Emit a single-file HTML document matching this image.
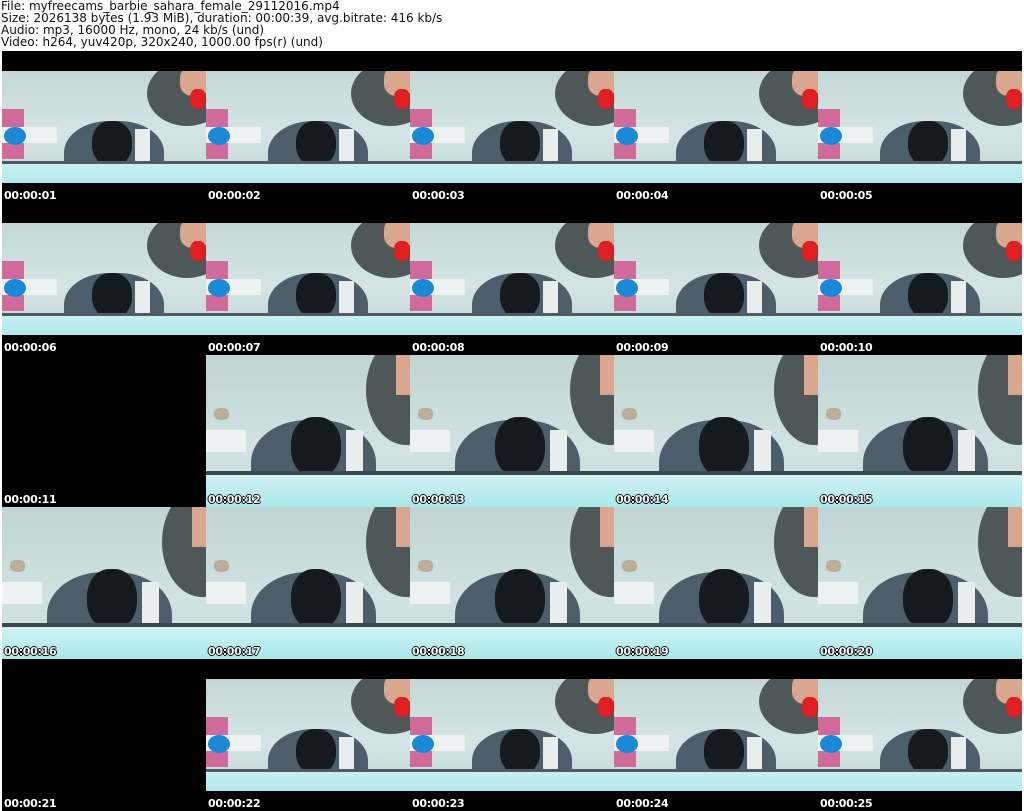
<!DOCTYPE html>
<html><head><meta charset="utf-8"><style>
*{margin:0;padding:0;box-sizing:border-box}
body{width:1024px;height:811px;background:#fff;position:relative;overflow:hidden;font-family:"DejaVu Sans","Liberation Sans",sans-serif}
.hd{position:absolute;left:1px;top:0;font-size:12px;line-height:12px;color:#111;white-space:pre}
.grid{position:absolute;left:2px;top:51px;width:1020px;height:760px;background:#000}
.c{position:absolute;width:204px;height:152px;overflow:hidden}
.t{position:absolute;left:2px;top:138px;font-size:11px;font-weight:bold;color:#fff;letter-spacing:-0.3px}
.o{text-shadow:1px 0 #000,-1px 0 #000,0 1px #000,0 -1px #000}
.A{position:absolute;left:0;top:20px;width:204px;height:112px;background:linear-gradient(#c4d8d8,#d4e4e4 55%,#c8dcdc 85%);overflow:hidden}
.B{position:absolute;left:0;top:0;width:204px;height:152px;background:linear-gradient(#c0d4d4,#d0e2e2 60%,#c8dcdc);overflow:hidden}
.s{position:absolute}
</style></head><body>
<div class="hd">File: myfreecams_barbie_sahara_female_29112016.mp4
Size: 2026138 bytes (1.93 MiB), duration: 00:00:39, avg.bitrate: 416 kb/s
Audio: mp3, 16000 Hz, mono, 24 kb/s (und)
Video: h264, yuv420p, 320x240, 1000.00 fps(r) (und)</div>
<div class="grid">
<!-- template A parts inline -->
<div class="c" style="left:0;top:0"><div class="A"><div class="s" style="left:145px;top:-10px;width:80px;height:65px;border-radius:50%;background:#4e5858"></div><div class="s" style="left:178px;top:-5px;width:30px;height:30px;background:#d9a78e;border-radius:40%"></div><div class="s" style="left:188px;top:18px;width:16px;height:20px;background:#e02020;border-radius:40%"></div><div class="s" style="left:62px;top:50px;width:100px;height:70px;border-radius:45% 45% 0 0;background:#4c5e6a"></div><div class="s" style="left:90px;top:50px;width:40px;height:45px;border-radius:45%;background:#151a20"></div><div class="s" style="left:133px;top:58px;width:15px;height:32px;background:#e8eeee"></div><div class="s" style="left:0;top:38px;width:22px;height:50px;background:#d06a9a"></div><div class="s" style="left:0;top:56px;width:55px;height:16px;background:#eef2f2"></div><div class="s" style="left:2px;top:56px;width:22px;height:18px;border-radius:50%;background:#1a8ad8"></div><div class="s" style="left:0;top:90px;width:204px;height:3px;background:#505a60"></div><div class="s" style="left:0;top:93px;width:204px;height:19px;background:linear-gradient(#c8f0f0,#b0eaee)"></div></div><div class="t">00:00:01</div></div>
<div class="c" style="left:204px;top:0"><div class="A"><div class="s" style="left:145px;top:-10px;width:80px;height:65px;border-radius:50%;background:#4e5858"></div><div class="s" style="left:178px;top:-5px;width:30px;height:30px;background:#d9a78e;border-radius:40%"></div><div class="s" style="left:188px;top:18px;width:16px;height:20px;background:#e02020;border-radius:40%"></div><div class="s" style="left:62px;top:50px;width:100px;height:70px;border-radius:45% 45% 0 0;background:#4c5e6a"></div><div class="s" style="left:90px;top:50px;width:40px;height:45px;border-radius:45%;background:#151a20"></div><div class="s" style="left:133px;top:58px;width:15px;height:32px;background:#e8eeee"></div><div class="s" style="left:0;top:38px;width:22px;height:50px;background:#d06a9a"></div><div class="s" style="left:0;top:56px;width:55px;height:16px;background:#eef2f2"></div><div class="s" style="left:2px;top:56px;width:22px;height:18px;border-radius:50%;background:#1a8ad8"></div><div class="s" style="left:0;top:90px;width:204px;height:3px;background:#505a60"></div><div class="s" style="left:0;top:93px;width:204px;height:19px;background:linear-gradient(#c8f0f0,#b0eaee)"></div></div><div class="t">00:00:02</div></div>
<div class="c" style="left:408px;top:0"><div class="A"><div class="s" style="left:145px;top:-10px;width:80px;height:65px;border-radius:50%;background:#4e5858"></div><div class="s" style="left:178px;top:-5px;width:30px;height:30px;background:#d9a78e;border-radius:40%"></div><div class="s" style="left:188px;top:18px;width:16px;height:20px;background:#e02020;border-radius:40%"></div><div class="s" style="left:62px;top:50px;width:100px;height:70px;border-radius:45% 45% 0 0;background:#4c5e6a"></div><div class="s" style="left:90px;top:50px;width:40px;height:45px;border-radius:45%;background:#151a20"></div><div class="s" style="left:133px;top:58px;width:15px;height:32px;background:#e8eeee"></div><div class="s" style="left:0;top:38px;width:22px;height:50px;background:#d06a9a"></div><div class="s" style="left:0;top:56px;width:55px;height:16px;background:#eef2f2"></div><div class="s" style="left:2px;top:56px;width:22px;height:18px;border-radius:50%;background:#1a8ad8"></div><div class="s" style="left:0;top:90px;width:204px;height:3px;background:#505a60"></div><div class="s" style="left:0;top:93px;width:204px;height:19px;background:linear-gradient(#c8f0f0,#b0eaee)"></div></div><div class="t">00:00:03</div></div>
<div class="c" style="left:612px;top:0"><div class="A"><div class="s" style="left:145px;top:-10px;width:80px;height:65px;border-radius:50%;background:#4e5858"></div><div class="s" style="left:178px;top:-5px;width:30px;height:30px;background:#d9a78e;border-radius:40%"></div><div class="s" style="left:188px;top:18px;width:16px;height:20px;background:#e02020;border-radius:40%"></div><div class="s" style="left:62px;top:50px;width:100px;height:70px;border-radius:45% 45% 0 0;background:#4c5e6a"></div><div class="s" style="left:90px;top:50px;width:40px;height:45px;border-radius:45%;background:#151a20"></div><div class="s" style="left:133px;top:58px;width:15px;height:32px;background:#e8eeee"></div><div class="s" style="left:0;top:38px;width:22px;height:50px;background:#d06a9a"></div><div class="s" style="left:0;top:56px;width:55px;height:16px;background:#eef2f2"></div><div class="s" style="left:2px;top:56px;width:22px;height:18px;border-radius:50%;background:#1a8ad8"></div><div class="s" style="left:0;top:90px;width:204px;height:3px;background:#505a60"></div><div class="s" style="left:0;top:93px;width:204px;height:19px;background:linear-gradient(#c8f0f0,#b0eaee)"></div></div><div class="t">00:00:04</div></div>
<div class="c" style="left:816px;top:0"><div class="A"><div class="s" style="left:145px;top:-10px;width:80px;height:65px;border-radius:50%;background:#4e5858"></div><div class="s" style="left:178px;top:-5px;width:30px;height:30px;background:#d9a78e;border-radius:40%"></div><div class="s" style="left:188px;top:18px;width:16px;height:20px;background:#e02020;border-radius:40%"></div><div class="s" style="left:62px;top:50px;width:100px;height:70px;border-radius:45% 45% 0 0;background:#4c5e6a"></div><div class="s" style="left:90px;top:50px;width:40px;height:45px;border-radius:45%;background:#151a20"></div><div class="s" style="left:133px;top:58px;width:15px;height:32px;background:#e8eeee"></div><div class="s" style="left:0;top:38px;width:22px;height:50px;background:#d06a9a"></div><div class="s" style="left:0;top:56px;width:55px;height:16px;background:#eef2f2"></div><div class="s" style="left:2px;top:56px;width:22px;height:18px;border-radius:50%;background:#1a8ad8"></div><div class="s" style="left:0;top:90px;width:204px;height:3px;background:#505a60"></div><div class="s" style="left:0;top:93px;width:204px;height:19px;background:linear-gradient(#c8f0f0,#b0eaee)"></div></div><div class="t">00:00:05</div></div>

<div class="c" style="left:0;top:152px"><div class="A"><div class="s" style="left:145px;top:-10px;width:80px;height:65px;border-radius:50%;background:#4e5858"></div><div class="s" style="left:178px;top:-5px;width:30px;height:30px;background:#d9a78e;border-radius:40%"></div><div class="s" style="left:188px;top:18px;width:16px;height:20px;background:#e02020;border-radius:40%"></div><div class="s" style="left:62px;top:50px;width:100px;height:70px;border-radius:45% 45% 0 0;background:#4c5e6a"></div><div class="s" style="left:90px;top:50px;width:40px;height:45px;border-radius:45%;background:#151a20"></div><div class="s" style="left:133px;top:58px;width:15px;height:32px;background:#e8eeee"></div><div class="s" style="left:0;top:38px;width:22px;height:50px;background:#d06a9a"></div><div class="s" style="left:0;top:56px;width:55px;height:16px;background:#eef2f2"></div><div class="s" style="left:2px;top:56px;width:22px;height:18px;border-radius:50%;background:#1a8ad8"></div><div class="s" style="left:0;top:90px;width:204px;height:3px;background:#505a60"></div><div class="s" style="left:0;top:93px;width:204px;height:19px;background:linear-gradient(#c8f0f0,#b0eaee)"></div></div><div class="t">00:00:06</div></div>
<div class="c" style="left:204px;top:152px"><div class="A"><div class="s" style="left:145px;top:-10px;width:80px;height:65px;border-radius:50%;background:#4e5858"></div><div class="s" style="left:178px;top:-5px;width:30px;height:30px;background:#d9a78e;border-radius:40%"></div><div class="s" style="left:188px;top:18px;width:16px;height:20px;background:#e02020;border-radius:40%"></div><div class="s" style="left:62px;top:50px;width:100px;height:70px;border-radius:45% 45% 0 0;background:#4c5e6a"></div><div class="s" style="left:90px;top:50px;width:40px;height:45px;border-radius:45%;background:#151a20"></div><div class="s" style="left:133px;top:58px;width:15px;height:32px;background:#e8eeee"></div><div class="s" style="left:0;top:38px;width:22px;height:50px;background:#d06a9a"></div><div class="s" style="left:0;top:56px;width:55px;height:16px;background:#eef2f2"></div><div class="s" style="left:2px;top:56px;width:22px;height:18px;border-radius:50%;background:#1a8ad8"></div><div class="s" style="left:0;top:90px;width:204px;height:3px;background:#505a60"></div><div class="s" style="left:0;top:93px;width:204px;height:19px;background:linear-gradient(#c8f0f0,#b0eaee)"></div></div><div class="t">00:00:07</div></div>
<div class="c" style="left:408px;top:152px"><div class="A"><div class="s" style="left:145px;top:-10px;width:80px;height:65px;border-radius:50%;background:#4e5858"></div><div class="s" style="left:178px;top:-5px;width:30px;height:30px;background:#d9a78e;border-radius:40%"></div><div class="s" style="left:188px;top:18px;width:16px;height:20px;background:#e02020;border-radius:40%"></div><div class="s" style="left:62px;top:50px;width:100px;height:70px;border-radius:45% 45% 0 0;background:#4c5e6a"></div><div class="s" style="left:90px;top:50px;width:40px;height:45px;border-radius:45%;background:#151a20"></div><div class="s" style="left:133px;top:58px;width:15px;height:32px;background:#e8eeee"></div><div class="s" style="left:0;top:38px;width:22px;height:50px;background:#d06a9a"></div><div class="s" style="left:0;top:56px;width:55px;height:16px;background:#eef2f2"></div><div class="s" style="left:2px;top:56px;width:22px;height:18px;border-radius:50%;background:#1a8ad8"></div><div class="s" style="left:0;top:90px;width:204px;height:3px;background:#505a60"></div><div class="s" style="left:0;top:93px;width:204px;height:19px;background:linear-gradient(#c8f0f0,#b0eaee)"></div></div><div class="t">00:00:08</div></div>
<div class="c" style="left:612px;top:152px"><div class="A"><div class="s" style="left:145px;top:-10px;width:80px;height:65px;border-radius:50%;background:#4e5858"></div><div class="s" style="left:178px;top:-5px;width:30px;height:30px;background:#d9a78e;border-radius:40%"></div><div class="s" style="left:188px;top:18px;width:16px;height:20px;background:#e02020;border-radius:40%"></div><div class="s" style="left:62px;top:50px;width:100px;height:70px;border-radius:45% 45% 0 0;background:#4c5e6a"></div><div class="s" style="left:90px;top:50px;width:40px;height:45px;border-radius:45%;background:#151a20"></div><div class="s" style="left:133px;top:58px;width:15px;height:32px;background:#e8eeee"></div><div class="s" style="left:0;top:38px;width:22px;height:50px;background:#d06a9a"></div><div class="s" style="left:0;top:56px;width:55px;height:16px;background:#eef2f2"></div><div class="s" style="left:2px;top:56px;width:22px;height:18px;border-radius:50%;background:#1a8ad8"></div><div class="s" style="left:0;top:90px;width:204px;height:3px;background:#505a60"></div><div class="s" style="left:0;top:93px;width:204px;height:19px;background:linear-gradient(#c8f0f0,#b0eaee)"></div></div><div class="t">00:00:09</div></div>
<div class="c" style="left:816px;top:152px"><div class="A"><div class="s" style="left:145px;top:-10px;width:80px;height:65px;border-radius:50%;background:#4e5858"></div><div class="s" style="left:178px;top:-5px;width:30px;height:30px;background:#d9a78e;border-radius:40%"></div><div class="s" style="left:188px;top:18px;width:16px;height:20px;background:#e02020;border-radius:40%"></div><div class="s" style="left:62px;top:50px;width:100px;height:70px;border-radius:45% 45% 0 0;background:#4c5e6a"></div><div class="s" style="left:90px;top:50px;width:40px;height:45px;border-radius:45%;background:#151a20"></div><div class="s" style="left:133px;top:58px;width:15px;height:32px;background:#e8eeee"></div><div class="s" style="left:0;top:38px;width:22px;height:50px;background:#d06a9a"></div><div class="s" style="left:0;top:56px;width:55px;height:16px;background:#eef2f2"></div><div class="s" style="left:2px;top:56px;width:22px;height:18px;border-radius:50%;background:#1a8ad8"></div><div class="s" style="left:0;top:90px;width:204px;height:3px;background:#505a60"></div><div class="s" style="left:0;top:93px;width:204px;height:19px;background:linear-gradient(#c8f0f0,#b0eaee)"></div></div><div class="t">00:00:10</div></div>

<div class="c" style="left:0;top:304px"><div class="t">00:00:11</div></div>
<div class="c" style="left:204px;top:304px"><div class="B"><div class="s" style="left:160px;top:-20px;width:80px;height:110px;border-radius:50%;background:#4e5858"></div><div class="s" style="left:190px;top:-5px;width:20px;height:45px;background:#d9a78e"></div><div class="s" style="left:45px;top:65px;width:125px;height:95px;border-radius:45% 45% 0 0;background:#4c5e6a"></div><div class="s" style="left:85px;top:62px;width:50px;height:60px;border-radius:45%;background:#151a20"></div><div class="s" style="left:140px;top:75px;width:17px;height:42px;background:#e8eeee"></div><div class="s" style="left:0;top:75px;width:40px;height:22px;background:#eef2f2"></div><div class="s" style="left:8px;top:53px;width:15px;height:12px;background:#bcae98;border-radius:40%"></div><div class="s" style="left:0;top:116px;width:204px;height:4px;background:#3c464c"></div><div class="s" style="left:0;top:120px;width:204px;height:32px;background:linear-gradient(#d0f2f2,#a8e8ec)"></div></div><div class="t o">00:00:12</div></div>
<div class="c" style="left:408px;top:304px"><div class="B"><div class="s" style="left:160px;top:-20px;width:80px;height:110px;border-radius:50%;background:#4e5858"></div><div class="s" style="left:190px;top:-5px;width:20px;height:45px;background:#d9a78e"></div><div class="s" style="left:45px;top:65px;width:125px;height:95px;border-radius:45% 45% 0 0;background:#4c5e6a"></div><div class="s" style="left:85px;top:62px;width:50px;height:60px;border-radius:45%;background:#151a20"></div><div class="s" style="left:140px;top:75px;width:17px;height:42px;background:#e8eeee"></div><div class="s" style="left:0;top:75px;width:40px;height:22px;background:#eef2f2"></div><div class="s" style="left:8px;top:53px;width:15px;height:12px;background:#bcae98;border-radius:40%"></div><div class="s" style="left:0;top:116px;width:204px;height:4px;background:#3c464c"></div><div class="s" style="left:0;top:120px;width:204px;height:32px;background:linear-gradient(#d0f2f2,#a8e8ec)"></div></div><div class="t o">00:00:13</div></div>
<div class="c" style="left:612px;top:304px"><div class="B"><div class="s" style="left:160px;top:-20px;width:80px;height:110px;border-radius:50%;background:#4e5858"></div><div class="s" style="left:190px;top:-5px;width:20px;height:45px;background:#d9a78e"></div><div class="s" style="left:45px;top:65px;width:125px;height:95px;border-radius:45% 45% 0 0;background:#4c5e6a"></div><div class="s" style="left:85px;top:62px;width:50px;height:60px;border-radius:45%;background:#151a20"></div><div class="s" style="left:140px;top:75px;width:17px;height:42px;background:#e8eeee"></div><div class="s" style="left:0;top:75px;width:40px;height:22px;background:#eef2f2"></div><div class="s" style="left:8px;top:53px;width:15px;height:12px;background:#bcae98;border-radius:40%"></div><div class="s" style="left:0;top:116px;width:204px;height:4px;background:#3c464c"></div><div class="s" style="left:0;top:120px;width:204px;height:32px;background:linear-gradient(#d0f2f2,#a8e8ec)"></div></div><div class="t o">00:00:14</div></div>
<div class="c" style="left:816px;top:304px"><div class="B"><div class="s" style="left:160px;top:-20px;width:80px;height:110px;border-radius:50%;background:#4e5858"></div><div class="s" style="left:190px;top:-5px;width:20px;height:45px;background:#d9a78e"></div><div class="s" style="left:45px;top:65px;width:125px;height:95px;border-radius:45% 45% 0 0;background:#4c5e6a"></div><div class="s" style="left:85px;top:62px;width:50px;height:60px;border-radius:45%;background:#151a20"></div><div class="s" style="left:140px;top:75px;width:17px;height:42px;background:#e8eeee"></div><div class="s" style="left:0;top:75px;width:40px;height:22px;background:#eef2f2"></div><div class="s" style="left:8px;top:53px;width:15px;height:12px;background:#bcae98;border-radius:40%"></div><div class="s" style="left:0;top:116px;width:204px;height:4px;background:#3c464c"></div><div class="s" style="left:0;top:120px;width:204px;height:32px;background:linear-gradient(#d0f2f2,#a8e8ec)"></div></div><div class="t o">00:00:15</div></div>

<div class="c" style="left:0;top:456px"><div class="B"><div class="s" style="left:160px;top:-20px;width:80px;height:110px;border-radius:50%;background:#4e5858"></div><div class="s" style="left:190px;top:-5px;width:20px;height:45px;background:#d9a78e"></div><div class="s" style="left:45px;top:65px;width:125px;height:95px;border-radius:45% 45% 0 0;background:#4c5e6a"></div><div class="s" style="left:85px;top:62px;width:50px;height:60px;border-radius:45%;background:#151a20"></div><div class="s" style="left:140px;top:75px;width:17px;height:42px;background:#e8eeee"></div><div class="s" style="left:0;top:75px;width:40px;height:22px;background:#eef2f2"></div><div class="s" style="left:8px;top:53px;width:15px;height:12px;background:#bcae98;border-radius:40%"></div><div class="s" style="left:0;top:116px;width:204px;height:4px;background:#3c464c"></div><div class="s" style="left:0;top:120px;width:204px;height:32px;background:linear-gradient(#d0f2f2,#a8e8ec)"></div></div><div class="t o">00:00:16</div></div>
<div class="c" style="left:204px;top:456px"><div class="B"><div class="s" style="left:160px;top:-20px;width:80px;height:110px;border-radius:50%;background:#4e5858"></div><div class="s" style="left:190px;top:-5px;width:20px;height:45px;background:#d9a78e"></div><div class="s" style="left:45px;top:65px;width:125px;height:95px;border-radius:45% 45% 0 0;background:#4c5e6a"></div><div class="s" style="left:85px;top:62px;width:50px;height:60px;border-radius:45%;background:#151a20"></div><div class="s" style="left:140px;top:75px;width:17px;height:42px;background:#e8eeee"></div><div class="s" style="left:0;top:75px;width:40px;height:22px;background:#eef2f2"></div><div class="s" style="left:8px;top:53px;width:15px;height:12px;background:#bcae98;border-radius:40%"></div><div class="s" style="left:0;top:116px;width:204px;height:4px;background:#3c464c"></div><div class="s" style="left:0;top:120px;width:204px;height:32px;background:linear-gradient(#d0f2f2,#a8e8ec)"></div></div><div class="t o">00:00:17</div></div>
<div class="c" style="left:408px;top:456px"><div class="B"><div class="s" style="left:160px;top:-20px;width:80px;height:110px;border-radius:50%;background:#4e5858"></div><div class="s" style="left:190px;top:-5px;width:20px;height:45px;background:#d9a78e"></div><div class="s" style="left:45px;top:65px;width:125px;height:95px;border-radius:45% 45% 0 0;background:#4c5e6a"></div><div class="s" style="left:85px;top:62px;width:50px;height:60px;border-radius:45%;background:#151a20"></div><div class="s" style="left:140px;top:75px;width:17px;height:42px;background:#e8eeee"></div><div class="s" style="left:0;top:75px;width:40px;height:22px;background:#eef2f2"></div><div class="s" style="left:8px;top:53px;width:15px;height:12px;background:#bcae98;border-radius:40%"></div><div class="s" style="left:0;top:116px;width:204px;height:4px;background:#3c464c"></div><div class="s" style="left:0;top:120px;width:204px;height:32px;background:linear-gradient(#d0f2f2,#a8e8ec)"></div></div><div class="t o">00:00:18</div></div>
<div class="c" style="left:612px;top:456px"><div class="B"><div class="s" style="left:160px;top:-20px;width:80px;height:110px;border-radius:50%;background:#4e5858"></div><div class="s" style="left:190px;top:-5px;width:20px;height:45px;background:#d9a78e"></div><div class="s" style="left:45px;top:65px;width:125px;height:95px;border-radius:45% 45% 0 0;background:#4c5e6a"></div><div class="s" style="left:85px;top:62px;width:50px;height:60px;border-radius:45%;background:#151a20"></div><div class="s" style="left:140px;top:75px;width:17px;height:42px;background:#e8eeee"></div><div class="s" style="left:0;top:75px;width:40px;height:22px;background:#eef2f2"></div><div class="s" style="left:8px;top:53px;width:15px;height:12px;background:#bcae98;border-radius:40%"></div><div class="s" style="left:0;top:116px;width:204px;height:4px;background:#3c464c"></div><div class="s" style="left:0;top:120px;width:204px;height:32px;background:linear-gradient(#d0f2f2,#a8e8ec)"></div></div><div class="t o">00:00:19</div></div>
<div class="c" style="left:816px;top:456px"><div class="B"><div class="s" style="left:160px;top:-20px;width:80px;height:110px;border-radius:50%;background:#4e5858"></div><div class="s" style="left:190px;top:-5px;width:20px;height:45px;background:#d9a78e"></div><div class="s" style="left:45px;top:65px;width:125px;height:95px;border-radius:45% 45% 0 0;background:#4c5e6a"></div><div class="s" style="left:85px;top:62px;width:50px;height:60px;border-radius:45%;background:#151a20"></div><div class="s" style="left:140px;top:75px;width:17px;height:42px;background:#e8eeee"></div><div class="s" style="left:0;top:75px;width:40px;height:22px;background:#eef2f2"></div><div class="s" style="left:8px;top:53px;width:15px;height:12px;background:#bcae98;border-radius:40%"></div><div class="s" style="left:0;top:116px;width:204px;height:4px;background:#3c464c"></div><div class="s" style="left:0;top:120px;width:204px;height:32px;background:linear-gradient(#d0f2f2,#a8e8ec)"></div></div><div class="t o">00:00:20</div></div>

<div class="c" style="left:0;top:608px"><div class="t">00:00:21</div></div>
<div class="c" style="left:204px;top:608px"><div class="A"><div class="s" style="left:145px;top:-10px;width:80px;height:65px;border-radius:50%;background:#4e5858"></div><div class="s" style="left:178px;top:-5px;width:30px;height:30px;background:#d9a78e;border-radius:40%"></div><div class="s" style="left:188px;top:18px;width:16px;height:20px;background:#e02020;border-radius:40%"></div><div class="s" style="left:62px;top:50px;width:100px;height:70px;border-radius:45% 45% 0 0;background:#4c5e6a"></div><div class="s" style="left:90px;top:50px;width:40px;height:45px;border-radius:45%;background:#151a20"></div><div class="s" style="left:133px;top:58px;width:15px;height:32px;background:#e8eeee"></div><div class="s" style="left:0;top:38px;width:22px;height:50px;background:#d06a9a"></div><div class="s" style="left:0;top:56px;width:55px;height:16px;background:#eef2f2"></div><div class="s" style="left:2px;top:56px;width:22px;height:18px;border-radius:50%;background:#1a8ad8"></div><div class="s" style="left:0;top:90px;width:204px;height:3px;background:#505a60"></div><div class="s" style="left:0;top:93px;width:204px;height:19px;background:linear-gradient(#c8f0f0,#b0eaee)"></div></div><div class="t">00:00:22</div></div>
<div class="c" style="left:408px;top:608px"><div class="A"><div class="s" style="left:145px;top:-10px;width:80px;height:65px;border-radius:50%;background:#4e5858"></div><div class="s" style="left:178px;top:-5px;width:30px;height:30px;background:#d9a78e;border-radius:40%"></div><div class="s" style="left:188px;top:18px;width:16px;height:20px;background:#e02020;border-radius:40%"></div><div class="s" style="left:62px;top:50px;width:100px;height:70px;border-radius:45% 45% 0 0;background:#4c5e6a"></div><div class="s" style="left:90px;top:50px;width:40px;height:45px;border-radius:45%;background:#151a20"></div><div class="s" style="left:133px;top:58px;width:15px;height:32px;background:#e8eeee"></div><div class="s" style="left:0;top:38px;width:22px;height:50px;background:#d06a9a"></div><div class="s" style="left:0;top:56px;width:55px;height:16px;background:#eef2f2"></div><div class="s" style="left:2px;top:56px;width:22px;height:18px;border-radius:50%;background:#1a8ad8"></div><div class="s" style="left:0;top:90px;width:204px;height:3px;background:#505a60"></div><div class="s" style="left:0;top:93px;width:204px;height:19px;background:linear-gradient(#c8f0f0,#b0eaee)"></div></div><div class="t">00:00:23</div></div>
<div class="c" style="left:612px;top:608px"><div class="A"><div class="s" style="left:145px;top:-10px;width:80px;height:65px;border-radius:50%;background:#4e5858"></div><div class="s" style="left:178px;top:-5px;width:30px;height:30px;background:#d9a78e;border-radius:40%"></div><div class="s" style="left:188px;top:18px;width:16px;height:20px;background:#e02020;border-radius:40%"></div><div class="s" style="left:62px;top:50px;width:100px;height:70px;border-radius:45% 45% 0 0;background:#4c5e6a"></div><div class="s" style="left:90px;top:50px;width:40px;height:45px;border-radius:45%;background:#151a20"></div><div class="s" style="left:133px;top:58px;width:15px;height:32px;background:#e8eeee"></div><div class="s" style="left:0;top:38px;width:22px;height:50px;background:#d06a9a"></div><div class="s" style="left:0;top:56px;width:55px;height:16px;background:#eef2f2"></div><div class="s" style="left:2px;top:56px;width:22px;height:18px;border-radius:50%;background:#1a8ad8"></div><div class="s" style="left:0;top:90px;width:204px;height:3px;background:#505a60"></div><div class="s" style="left:0;top:93px;width:204px;height:19px;background:linear-gradient(#c8f0f0,#b0eaee)"></div></div><div class="t">00:00:24</div></div>
<div class="c" style="left:816px;top:608px"><div class="A"><div class="s" style="left:145px;top:-10px;width:80px;height:65px;border-radius:50%;background:#4e5858"></div><div class="s" style="left:178px;top:-5px;width:30px;height:30px;background:#d9a78e;border-radius:40%"></div><div class="s" style="left:188px;top:18px;width:16px;height:20px;background:#e02020;border-radius:40%"></div><div class="s" style="left:62px;top:50px;width:100px;height:70px;border-radius:45% 45% 0 0;background:#4c5e6a"></div><div class="s" style="left:90px;top:50px;width:40px;height:45px;border-radius:45%;background:#151a20"></div><div class="s" style="left:133px;top:58px;width:15px;height:32px;background:#e8eeee"></div><div class="s" style="left:0;top:38px;width:22px;height:50px;background:#d06a9a"></div><div class="s" style="left:0;top:56px;width:55px;height:16px;background:#eef2f2"></div><div class="s" style="left:2px;top:56px;width:22px;height:18px;border-radius:50%;background:#1a8ad8"></div><div class="s" style="left:0;top:90px;width:204px;height:3px;background:#505a60"></div><div class="s" style="left:0;top:93px;width:204px;height:19px;background:linear-gradient(#c8f0f0,#b0eaee)"></div></div><div class="t">00:00:25</div></div>
</div>
</body></html>
